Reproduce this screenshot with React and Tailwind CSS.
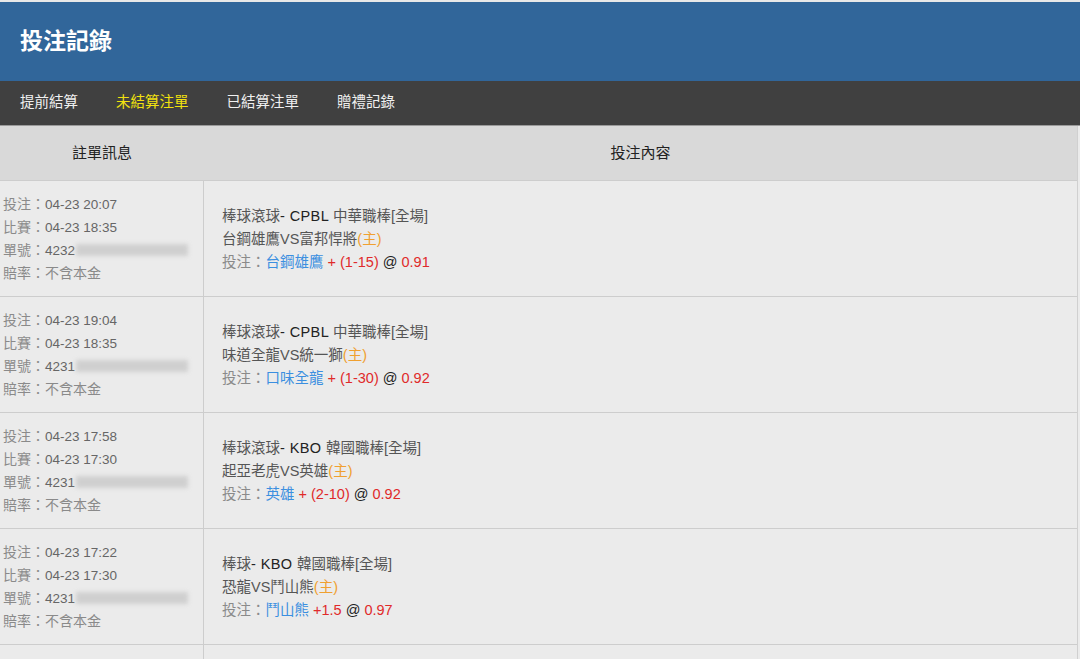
import React from 'react'

const bets = [
  { placed: '04-23 20:07', match: '04-23 18:35', id: '4232', sport: '棒球滾球', code: 'CPBL', league: '中華職棒', teams: '台鋼雄鷹VS富邦悍將', pick: '台鋼雄鷹', line: '+ (1-15)', odds: '0.91' },
  { placed: '04-23 19:04', match: '04-23 18:35', id: '4231', sport: '棒球滾球', code: 'CPBL', league: '中華職棒', teams: '味道全龍VS統一獅', pick: '口味全龍', line: '+ (1-30)', odds: '0.92' },
  { placed: '04-23 17:58', match: '04-23 17:30', id: '4231', sport: '棒球滾球', code: 'KBO', league: '韓國職棒', teams: '起亞老虎VS英雄', pick: '英雄', line: '+ (2-10)', odds: '0.92' },
  { placed: '04-23 17:22', match: '04-23 17:30', id: '4231', sport: '棒球', code: 'KBO', league: '韓國職棒', teams: '恐龍VS鬥山熊', pick: '鬥山熊', line: '+1.5', odds: '0.97' },
]

const tabs = ['提前結算', '未結算注單', '已結算注單', '贈禮記錄']

function Label({ children }) {
  return <span className="text-[14px] text-[#8a8a8a]">{children}</span>
}

function Row({ b }) {
  return (
    <div className="flex h-[116px] border-b border-[#cdcdcd] bg-[#ebebeb]">
      <div className="w-[204px] shrink-0 border-r border-[#cdcdcd] flex flex-col justify-center pl-[3px] text-[13.5px] leading-[23px] text-[#666]">
        <div><Label>投注：</Label>{b.placed}</div>
        <div><Label>比賽：</Label>{b.match}</div>
        <div className="flex items-center">
          <Label>單號：</Label>{b.id}
          <span className="ml-[1px] inline-block h-[12px] w-[112px] bg-[#c4c4c4] blur-[2px] opacity-70" />
        </div>
        <div><Label>賠率：不含本金</Label></div>
      </div>
      <div className="flex-1 flex flex-col justify-center pl-[18px] pt-[1px] text-[14.5px] leading-[23px] text-[#555]">
        <div>
          {b.sport}<span className="text-[#222] tracking-[0.4px]">- {b.code} </span>{b.league}[全場]
        </div>
        <div>{b.teams}<span className="text-[#f0a030]">(主)</span></div>
        <div className="text-[#8a8a8a]">
          投注：<span className="text-[#3b8fe0]">{b.pick}</span>{' '}
          <span className="text-[#e02a2a]">{b.line}</span>{' '}
          <span className="text-[#222]">@</span>{' '}
          <span className="text-[#e02a2a]">{b.odds}</span>
        </div>
      </div>
    </div>
  )
}

export default function App() {
  return (
    <div className="w-[1080px] h-[659px] overflow-hidden bg-[#ebebeb] font-['Liberation_Sans','Noto_Sans_CJK_TC',sans-serif]">
      <div className="h-[2px] bg-[#e8e8e8]" />
      <header className="h-[79px] bg-[#31669a] flex items-center px-[20px]">
        <h1 className="text-white text-[23px] font-bold">投注記錄</h1>
      </header>
      <nav className="h-[45px] bg-[#404040] flex items-center pl-[20px] gap-[38px] text-[14.5px] border-b border-[#9a9a9a]">
        {tabs.map((t, i) => (
          <span key={t} className={i === 1 ? 'text-[#f2e20e]' : 'text-[#f0f0f0]'}>{t}</span>
        ))}
      </nav>
      <div className="w-[1078px] border-r border-[#d0d0d0]">
        <div className="flex h-[55px] bg-[#d9d9d9] border-b border-[#cdcdcd] text-[15px] text-[#222]">
          <div className="w-[204px] shrink-0 flex items-center justify-center">註單訊息</div>
          <div className="flex-1 flex items-center justify-center">投注內容</div>
        </div>
        {bets.map((b, i) => (
          <Row key={i} b={b} />
        ))}
        <div className="flex h-[116px] bg-[#ebebeb]">
          <div className="w-[204px] shrink-0 border-r border-[#cdcdcd]" />
          <div className="flex-1" />
        </div>
      </div>
    </div>
  )
}
